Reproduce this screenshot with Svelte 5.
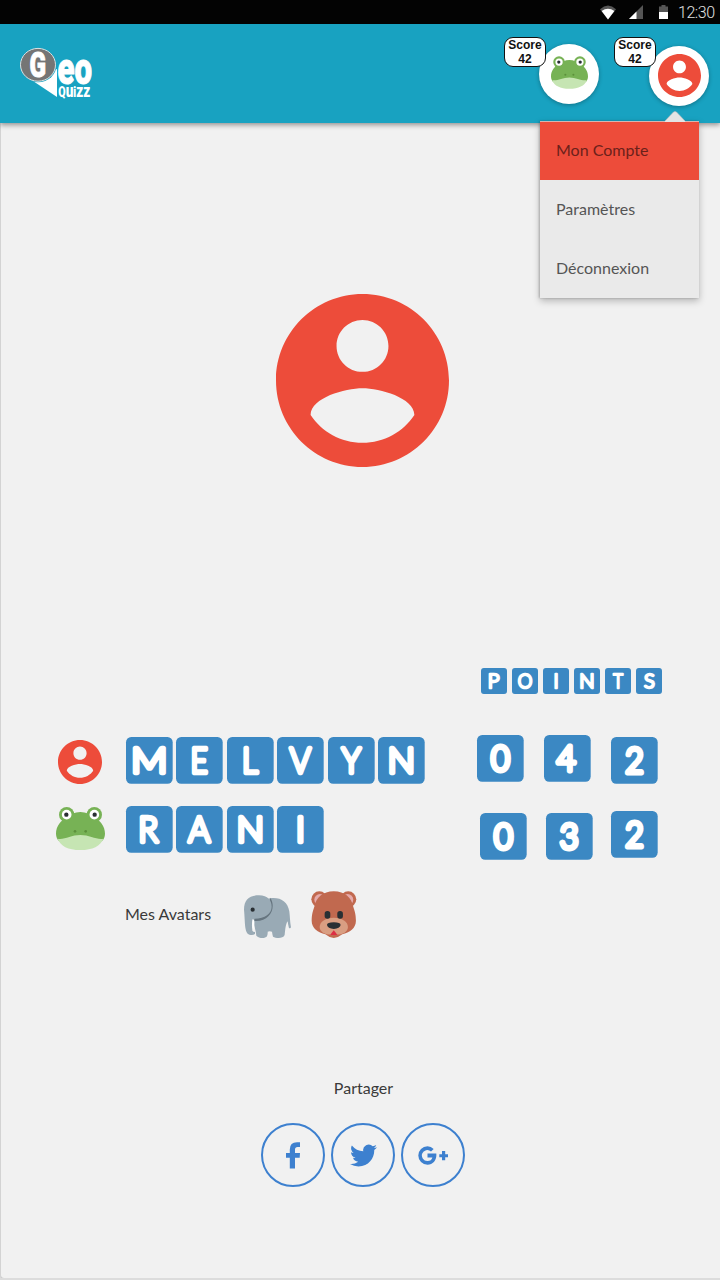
<script>
  const menu = ['Mon Compte', 'Paramètres', 'Déconnexion'];
  const glyphs = {
    M: [33.5, 0], E: [16.5, 0.6], L: [16.5, 1], V: [24.5, 0], Y: [22.5, 0], N: [25, 0],
    R: [20.5, 0.4], A: [25.5, 0], I: [6.6, 0], P: [20.5, 0.4], O: [27, 0], T: [20.5, 0], S: [20.5, 0.3],
    0: [21.5, 0], 4: [22, -1.3], 2: [19.5, 0], 3: [20, -0.4]
  };

  // Stretches each character so that its outlined width equals the tile set's width.
  function fit(node, ch) {
    const [w, dx] = glyphs[ch];
    const size = 100;
    const ctx = document.createElement('canvas').getContext('2d');
    ctx.font = `300 ${size}px Lato`;
    const m = ctx.measureText(ch);
    const digit = /\d/.test(ch);
    const h = digit ? 30.4 : 29.8;
    const line = digit ? 5 : 4.4;
    const ink = (m.actualBoundingBoxRight + m.actualBoundingBoxLeft) / size;
    const tall = (m.actualBoundingBoxAscent + m.actualBoundingBoxDescent) / size;
    const fs = (h - line) / tall;
    const sx = ch === 'I' ? 1 : w / (ink * fs + line);
    const mid = (m.actualBoundingBoxRight - m.actualBoundingBoxLeft) / size / 2 * fs;
    node.setAttribute('font-size', fs);
    node.setAttribute('stroke-width', line);
    const base = 23.3 + (h - line) / 2 - (m.actualBoundingBoxDescent / size) * fs;
    node.setAttribute('transform', `translate(${23.3 + dx - mid * sx} ${base}) scale(${sx} 1)`);
  }
</script>

{#snippet tile(ch)}
  <svg class="tile" viewBox="0 0 46.6 46.6">
    <rect width="46.6" height="46.6" rx="5.2" fill="#3b88c3" />
    <text use:fit={ch}>{ch}</text>
  </svg>
{/snippet}

{#snippet account(cls)}
  <svg class={cls} viewBox="2 2 20 20">
    <path fill="#ed4c3a" d="M12 2C6.48 2 2 6.48 2 12s4.48 10 10 10 10-4.48 10-10S17.52 2 12 2zm0 3c1.66 0 3 1.34 3 3s-1.34 3-3 3-3-1.34-3-3 1.34-3 3-3zm0 14.2c-2.5 0-4.71-1.28-6-3.22.03-1.99 4-3.08 6-3.08 1.99 0 5.97 1.09 6 3.08-1.29 1.94-3.5 3.22-6 3.22z" />
  </svg>
{/snippet}

{#snippet frog(cls)}
  <svg class={cls} viewBox="0 0 147 129">
    <circle cx="32" cy="23" r="23" fill="#77b255" />
    <circle cx="115" cy="23" r="23" fill="#77b255" />
    <path fill="#77b255" d="M0 80C0 57 15 40 33 30C43 22 56 15 73 15S104 22 114 30C132 40 147 57 147 80C147 90 143 98 137 103H10C4 98 0 90 0 80Z" />
    <path fill="#c6e5b3" d="M5 95C25 99 45 84 73 84S122 99 142 95C134 117 110 129 73 129S13 117 5 95Z" />
    <circle cx="32" cy="23" r="14.5" fill="#fff" />
    <circle cx="115" cy="23" r="14.5" fill="#fff" />
    <circle cx="31" cy="23" r="6.5" fill="#292f33" />
    <circle cx="116" cy="23" r="6.5" fill="#292f33" />
    <circle cx="57" cy="73" r="4" fill="#5c913b" />
    <circle cx="89" cy="73" r="4" fill="#5c913b" />
  </svg>
{/snippet}

<div class="status">
  <svg width="18" height="15" viewBox="0 0 18 15"><path fill="#555" d="M1 4.2Q9-3.2 17 4.2L9 14.5Z" /><path fill="#fff" d="M2.6 6Q9 1.5 15.4 6L9 14.5Z" /></svg>
  <svg class="signal" width="14" height="14" viewBox="0 0 14 14"><path fill="#555" d="M14 0V14H0Z" /><path fill="#fff" d="M7.500 6.500V14H0Z" /></svg>
  <svg class="battery" width="9" height="14" viewBox="0 0 9 14"><path fill="#555" d="M2.500 0h4v1.500H9V14H0V1.500h2.500Z" /><path fill="#fff" d="M0 7h9v7H0Z" /></svg>
  <span>12:30</span>
</div>

<header>
  <svg class="logo" viewBox="20 47 73 52" width="73" height="52">
    <path fill="#fff" d="M30 79L57 97V69Z" />
    <ellipse cx="38" cy="65" rx="18.6" ry="17.2" fill="#18a2c1" />
    <ellipse cx="38" cy="64.8" rx="17.5" ry="16.4" fill="#757575" stroke="#d9e2e4" stroke-width="1" />
    <text class="cap" x="29.5" y="77" font-size="35" textLength="16.5" lengthAdjust="spacingAndGlyphs">G</text>
    <text class="cap" x="57.5" y="84" font-size="44" textLength="34.500" lengthAdjust="spacingAndGlyphs">eo</text>
    <text x="58.3" y="96.500" textLength="32" lengthAdjust="spacingAndGlyphs"><tspan font-size="14">Q</tspan><tspan font-size="18">u</tspan><tspan font-size="14">i</tspan><tspan font-size="18">zz</tspan></text>
  </svg>
  <div class="player first">
    <div class="badge">Score<br />42</div>
    {@render frog('head-frog')}
  </div>
  <div class="player">
    <div class="badge">Score<br />42</div>
    {@render account('head-user')}
  </div>
  <nav>
    <svg class="arrow" width="22" height="11" viewBox="0 0 22 11"><path fill="#e4e4e4" stroke="#bbb" stroke-width=".6" d="M0 11L9.500 1Q11 0 12.500 1L22 11" /></svg>
    {#each menu as item, i}
      <a href="#top" class:active={i === 0}>{item}</a>
    {/each}
  </nav>
</header>

<main>
  {@render account('portrait')}
  <section class="board">
    <div class="names">
      <div class="row">
        <div class="face">{@render account('user')}</div>
        {#each 'MELVYN' as ch}{@render tile(ch)}{/each}
      </div>
      <div class="row">
        <div class="face">{@render frog('frog')}</div>
        {#each 'RANI' as ch}{@render tile(ch)}{/each}
      </div>
    </div>
    <div class="points">
      <div class="title">{#each 'POINTS' as ch}{@render tile(ch)}{/each}</div>
      <div class="score one">{#each '042' as ch}{@render tile(ch)}{/each}</div>
      <div class="score two">{#each '032' as ch}{@render tile(ch)}{/each}</div>
    </div>
  </section>
  <section class="avatars">
    <span>Mes Avatars</span>
    <svg class="elephant" viewBox="402 74 142 130" width="47.3" height="43.3">
      <path fill="#99aab5" d="M480 84C512 80 533 94 538 123C540 138 540 154 543 171Q541 176 537 173C535 166 534 159 533 153C526 163 526 181 524 194C519 206 498 204 489 199Q487 191 486 184Q479 181 473 184Q474 193 470 199C460 206 447 203 439 196C438 180 432 170 432 150L450 92Z" />
      <path fill="#66757f" d="M481 82C500 112 480 155 434 152L432 143Q470 143 478 104Z" />
      <path fill="#99aab5" d="M402 118C402 88 418 75 447 75C474 75 485 91 485 109C485 130 465 145 434 145C423 149 426 171 427 181Q429 185 435 185V191Q430 195 422 194C402 192 406 160 402 118Z" />
      <path fill="#fff" d="M427 147Q434 149 433 158L430 181Q425 166 427 147Z" />
      <circle cx="428" cy="118" r="6.3" fill="#292f33" />
    </svg>
    <svg class="bear" viewBox="602 62 137 142" width="45.6" height="47.3">
      <circle cx="627" cy="87" r="24" fill="#c1694f" /><circle cx="714" cy="87" r="24" fill="#c1694f" />
      <circle cx="629" cy="88" r="17" fill="#e6aaaa" /><circle cx="712" cy="88" r="17" fill="#e6aaaa" />
      <path fill="#c1694f" d="M670.500 63C704 63 723 82 729 109C733 121 737 131 737 151C737 174 718 186 696 192Q683 203 670.500 203T645 192C623 186 604 174 604 151C604 131 608 121 612 109C618 82 637 63 670.500 63Z" />
      <path fill="#d99e82" d="M670.500 142C695 142 713 154 713 170C713 185 697 193 680 193H661C644 193 628 185 628 170C628 154 646 142 670.500 142Z" />
      <path fill="#292f33" d="M650 164Q650 156 670.500 156T691 164Q689 175 670.500 176Q652 175 650 164Z" />
      <path fill="#dd2e44" d="M670.500 180Q679 190 681 194H660Q662 190 670.500 180Z" />
      <rect x="643" y="122" width="17" height="23" rx="8" fill="#292f33" /><rect x="681" y="122" width="17" height="23" rx="8" fill="#292f33" />
    </svg>
  </section>
  <section class="share">
    <span>Partager</span>
    <div class="social">
      <a href="#fb" aria-label="Facebook"><svg width="14" height="27" viewBox="0 0 14 27"><path d="M14 .3V5H11.500Q9 5 9 7.500V11H14L13.700 15.800H9V26.500H3.800V15.800H0V11H3.800V7.500Q3.800 .3 11 .3Z" /></svg></a>
      <a href="#tw" aria-label="Twitter"><svg width="27" height="23" viewBox="0 2 24 20"><path d="M24 4.560a9.830 9.830 0 0 1-2.830.780 4.930 4.930 0 0 0 2.170-2.730 9.860 9.860 0 0 1-3.130 1.200 4.920 4.920 0 0 0-8.390 4.490A13.980 13.980 0 0 1 1.670 3.150a4.920 4.920 0 0 0 1.520 6.570 4.900 4.900 0 0 1-2.230-.620v.060a4.930 4.930 0 0 0 3.950 4.830 4.930 4.930 0 0 1-2.220.080 4.930 4.930 0 0 0 4.600 3.420A9.870 9.870 0 0 1 0 19.540a13.940 13.940 0 0 0 7.550 2.210c9.050 0 14-7.500 14-14v-.640A10 10 0 0 0 24 4.560z" /></svg></a>
      <a href="#gp" aria-label="Google+"><svg width="30" height="19" viewBox="0 0 30 19"><path d="M9.500 7.600H18.300C19 13.900 15.300 18.700 9.500 18.700A9.200 9.200 0 0 1 9.500.3Q13 .3 15.700 2.900L13 5.600A5.400 5.400 0 1 0 9.500 14.900Q13.500 14.900 14.400 11.400H9.500ZM24 5H27.200V8.200H30V11.200H27.200V14.200H24V11.200H21.300V8.200H24Z" /></svg></a>
    </div>
  </section>
</main>

<style>
  :global(body) { background: #dcdcdc; font-family: Lato, "Open Sans", sans-serif; }
  svg { display: block; flex: none; }
  .status { box-sizing: border-box; height: 24px; background: #030303; display: flex; align-items: flex-start; padding: 5px 5px 0 599px; color: #e0e0e0; }
  .signal { margin-left: 12px; }
  .battery { margin-left: 16px; }
  .status span { margin: -2px 0 0 10px; font: 300 16px/20px Roboto, sans-serif; white-space: nowrap; letter-spacing: -.45px; }
  header { position: relative; z-index: 2; box-sizing: border-box; height: 99px; background: #18a2c1; box-shadow: 0 2px 5px rgba(0,0,0,.4); display: flex; align-items: flex-start; padding: 22px 11px 0 20px; }
  .logo { margin: 1px auto 0 0; overflow: visible; }
  .logo text { font-family: Roboto, sans-serif; font-weight: 900; fill: #fff; }
  .logo .cap { stroke: #fff; stroke-width: 1; }
  .player { position: relative; width: 60px; height: 60px; border-radius: 50%; background: #fff; display: flex; align-items: center; justify-content: center; box-shadow: 0 1px 4px rgba(0,0,0,.3); }
  .player.first { margin: -2px 50px 0 0; }
  .badge { position: absolute; left: -35px; top: -9px; box-sizing: border-box; width: 42px; height: 30px; border: 1px solid #111; border-radius: 9px; background: #fff; font: bold 12px/14px "Liberation Sans", sans-serif; text-align: center; color: #111; }
  .player.first .badge { top: -7px; }
  :global(.head-user) { width: 43px; height: 43px; margin-top: -1px; }
  :global(.head-frog) { width: 37px; height: 33px; margin-top: -4px; }
  nav { position: absolute; left: 540px; top: 97px; width: 159px; box-shadow: 0 3px 7px rgba(0,0,0,.25), -1px 0 2px rgba(0,0,0,.2); }
  .arrow { position: absolute; left: 124px; top: -10px; }
  nav a { display: block; box-sizing: border-box; height: 59px; padding-left: 16px; line-height: 57px; font-size: 16px; background: #eaeaea; color: #555; text-decoration: none; }
  nav a.active { background: #ed4c3a; color: #6b211a; border-top: 1px solid #d6b5b0; line-height: 55px; }
  main { box-sizing: border-box; height: 1155px; margin-left: 1px; padding-top: 171px; background: #f1f1f1; border-radius: 0 0 0 3px; box-shadow: 0 1px 2px #bbb; overflow: hidden; }
  :global(.portrait) { width: 173px; height: 173px; margin-left: 275px; }
  .board { display: flex; height: 193px; margin-top: 201px; padding-left: 55px; }
  .names { width: 421px; padding-top: 69px; box-sizing: border-box; }
  .row { display: flex; gap: 3.800px; height: 69px; }
  .face { width: 66px; height: 47px; display: flex; align-items: center; }
  :global(.user) { width: 44px; height: 44px; margin: 2px 0 0 2px; }
  :global(.frog) { width: 49px; height: 43px; margin-top: -2px; }
  .tile { width: 46.700px; height: 46.700px; overflow: visible; }
  .tile text { font-family: Lato, sans-serif; font-weight: 300; fill: #fff; stroke: #fff; stroke-linejoin: round; stroke-linecap: round; }
  .title { display: flex; gap: 5.200px; padding-left: 3.500px; height: 67px; }
  .title .tile { width: 26px; height: 26px; }
  .score { display: flex; gap: 20.300px; height: 78px; }
  .score.one .tile:last-child { margin-top: 2px; }
  .score.two { gap: 18.900px; padding-left: 3px; }
  .score.two .tile:last-child { margin-top: -2px; }
  .avatars { display: flex; height: 60px; margin: 29px 0 0 124px; font-size: 16px; color: #3a3a3a; }
  .avatars span { width: 119px; line-height: 48px; white-space: nowrap; }
  .elephant { margin-top: 4.500px; }
  .bear { margin: 1px 0 0 20px; }
  .share { margin-top: 127px; color: #3a3a3a; font-size: 16px; text-align: center; padding-left: 5px; }
  .share span { display: block; height: 23px; line-height: 22px; padding-left: 1px; }
  .social { display: flex; justify-content: center; gap: 6px; margin-top: 23px; }
  .social a { box-sizing: border-box; width: 64px; height: 64px; border: 2px solid #3d80cf; border-radius: 50%; display: flex; align-items: center; justify-content: center; }
  .social path { fill: #3d80cf; }
</style>
